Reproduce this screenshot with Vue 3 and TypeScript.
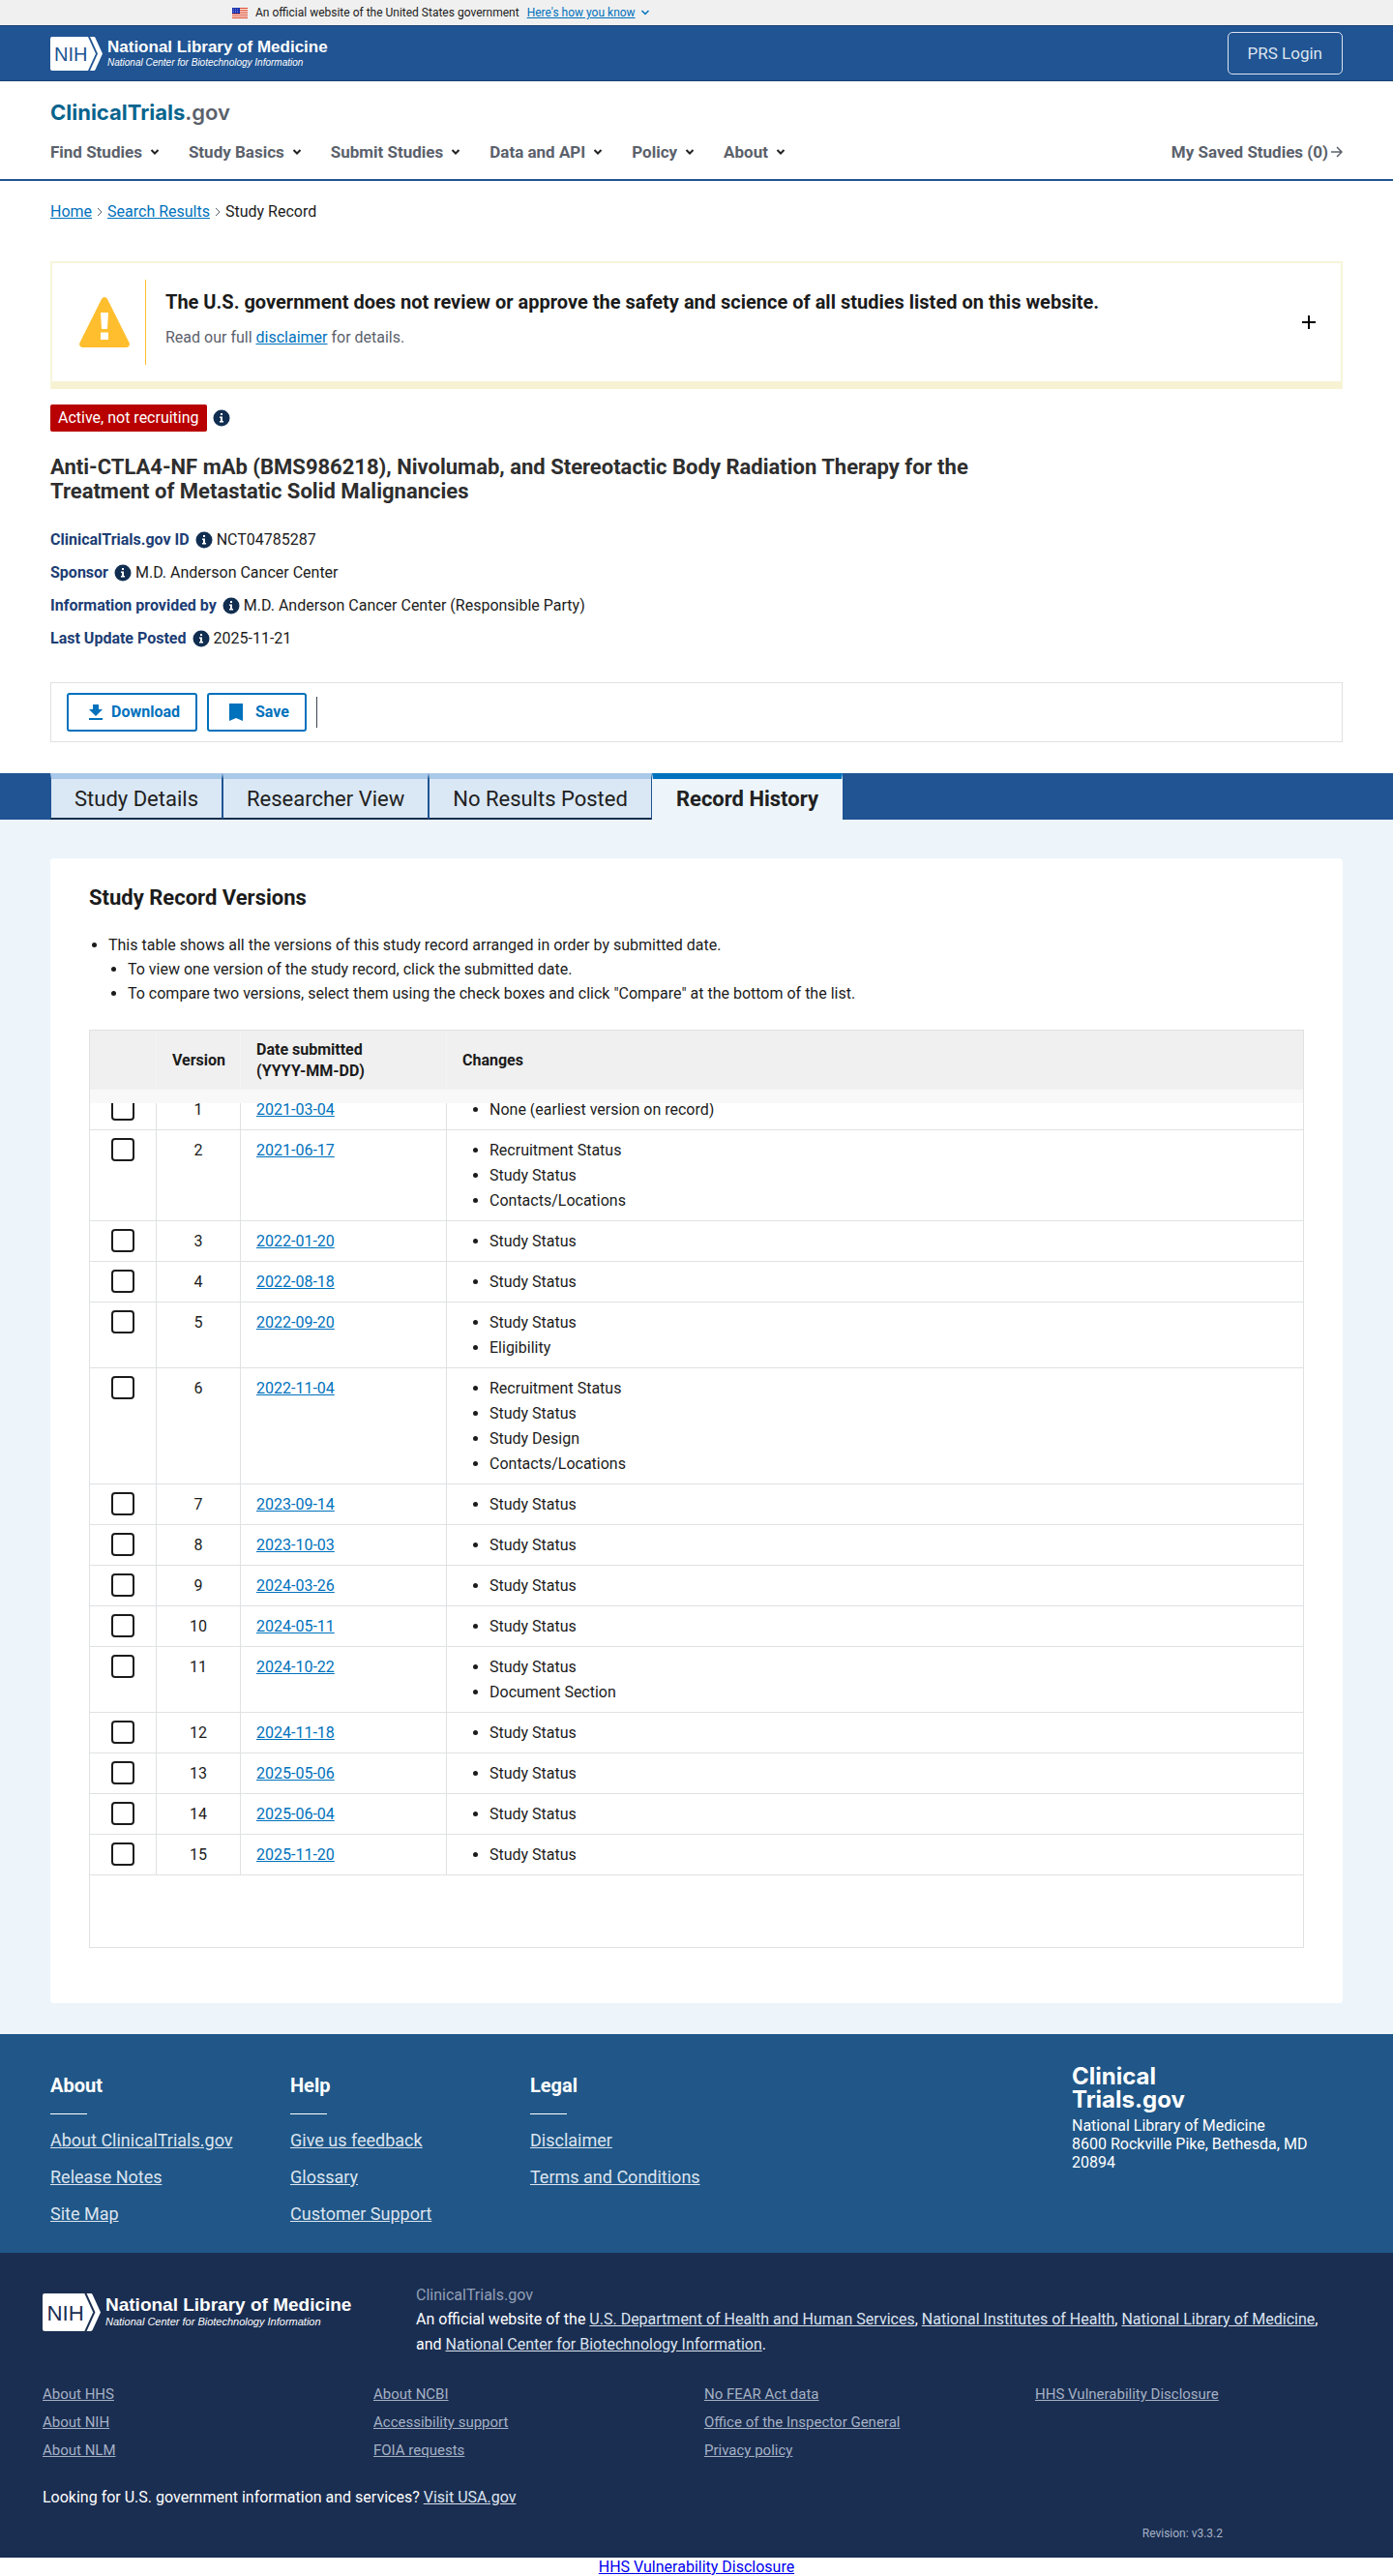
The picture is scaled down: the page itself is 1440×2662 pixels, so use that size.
<script setup lang="ts">
import { ref } from 'vue'

interface Version {
  id: number
  date: string
  changes: string[]
}

const navItems = ['Find Studies', 'Study Basics', 'Submit Studies', 'Data and API', 'Policy', 'About']

const facts = [
  { label: 'ClinicalTrials.gov ID', value: 'NCT04785287' },
  { label: 'Sponsor', value: 'M.D. Anderson Cancer Center' },
  { label: 'Information provided by', value: 'M.D. Anderson Cancer Center (Responsible Party)' },
  { label: 'Last Update Posted', value: '2025-11-21' },
]

const tabs = ['Study Details', 'Researcher View', 'No Results Posted', 'Record History']
const activeTab = ref('Record History')

const versions: Version[] = [
  { id: 1, date: '2021-03-04', changes: ['None (earliest version on record)'] },
  { id: 2, date: '2021-06-17', changes: ['Recruitment Status', 'Study Status', 'Contacts/Locations'] },
  { id: 3, date: '2022-01-20', changes: ['Study Status'] },
  { id: 4, date: '2022-08-18', changes: ['Study Status'] },
  { id: 5, date: '2022-09-20', changes: ['Study Status', 'Eligibility'] },
  { id: 6, date: '2022-11-04', changes: ['Recruitment Status', 'Study Status', 'Study Design', 'Contacts/Locations'] },
  { id: 7, date: '2023-09-14', changes: ['Study Status'] },
  { id: 8, date: '2023-10-03', changes: ['Study Status'] },
  { id: 9, date: '2024-03-26', changes: ['Study Status'] },
  { id: 10, date: '2024-05-11', changes: ['Study Status'] },
  { id: 11, date: '2024-10-22', changes: ['Study Status', 'Document Section'] },
  { id: 12, date: '2024-11-18', changes: ['Study Status'] },
  { id: 13, date: '2025-05-06', changes: ['Study Status'] },
  { id: 14, date: '2025-06-04', changes: ['Study Status'] },
  { id: 15, date: '2025-11-20', changes: ['Study Status'] },
]
const selected = ref<number[]>([])

const footerColumns = [
  { title: 'About', links: ['About ClinicalTrials.gov', 'Release Notes', 'Site Map'] },
  { title: 'Help', links: ['Give us feedback', 'Glossary', 'Customer Support'] },
  { title: 'Legal', links: ['Disclaimer', 'Terms and Conditions'] },
]

const agencyLinks = [
  ['About HHS', 'About NIH', 'About NLM'],
  ['About NCBI', 'Accessibility support', 'FOIA requests'],
  ['No FEAR Act data', 'Office of the Inspector General', 'Privacy policy'],
  ['HHS Vulnerability Disclosure'],
]
</script>

<template>
  <div class="page">
    <section class="gov-banner" aria-label="Official government website">
      <svg class="flag" viewBox="0 0 16 11" aria-hidden="true">
        <rect width="16" height="11" fill="#fff" />
        <path d="M0 .5h16M0 2.5h16M0 4.5h16M0 6.5h16M0 8.5h16M0 10.5h16" stroke="#db3e1f" />
        <rect width="8" height="6" fill="#1e33b1" />
        <path d="M1 1.5h6M1 3.5h6M1 5h6" stroke="#8d99e0" stroke-dasharray="1 1" stroke-width=".7" />
      </svg>
      <span>An official website of the United States government</span>
      <button type="button" class="how">
        <span>Here's how you know</span>
        <svg viewBox="0 0 10 10" aria-hidden="true"><path d="M1.5 3 5 6.5 8.5 3" /></svg>
      </button>
    </section>

    <div class="nlm-bar">
      <a href="#" class="nlm-logo">
        <svg viewBox="0 0 54 35" aria-hidden="true">
          <path d="M2 0h37l8 17.5-8 17.5H2a2 2 0 0 1-2-2V2a2 2 0 0 1 2-2z" fill="#fff" />
          <path d="M41 0h4q1 0 1.500 1L54 17.5 46.500 34q-.5 1-1.500 1h-4l8-17.500z" fill="#fff" />
          <text x="4" y="25" fill="#205493">NIH</text>
        </svg>
        <span class="nlm-words">
          <strong>National Library of Medicine</strong>
          <em>National Center for Biotechnology Information</em>
        </span>
      </a>
      <button type="button" class="prs">PRS Login</button>
    </div>

    <header class="site-head">
      <a href="#" class="brand">ClinicalTrials<span>.gov</span></a>
      <nav class="main-nav" aria-label="Main">
        <button v-for="item in navItems" :key="item" type="button">
          {{ item }}
          <svg viewBox="0 0 10 10" aria-hidden="true"><path d="M1.5 3 5 6.5 8.5 3" /></svg>
        </button>
        <a href="#" class="saved">
          My Saved Studies (0)
          <svg viewBox="0 0 12 12" aria-hidden="true"><path d="M0 6h11M6 1l5 5-5 5" /></svg>
        </a>
      </nav>
    </header>

    <main>
      <div class="intro">
        <nav class="crumbs" aria-label="Breadcrumb">
          <a href="#">Home</a>
          <svg viewBox="0 0 6 10" aria-hidden="true"><path d="M1 1l4 4-4 4" /></svg>
          <a href="#">Search Results</a>
          <svg viewBox="0 0 6 10" aria-hidden="true"><path d="M1 1l4 4-4 4" /></svg>
          <span>Study Record</span>
        </nav>

        <section class="notice">
          <svg class="warn" viewBox="0 0 52 52" aria-hidden="true">
            <path d="M23 2q3-4 6 0l22.5 45q1.5 4-2.500 5H3q-4-1-2.500-5z" fill="#ffbe2e" />
            <path d="M22 16h8l-1 17h-6zM22 36.5h8V44h-8z" fill="#fff" />
          </svg>
          <div class="notice-text">
            <h2>The U.S. government does not review or approve the safety and science of all studies listed on this website.</h2>
            <p>Read our full <a href="#">disclaimer</a> for details.</p>
          </div>
          <button type="button" class="expand" aria-label="Show more">
            <svg viewBox="0 0 14 14" aria-hidden="true"><path d="M7 0v14M0 7h14" /></svg>
          </button>
        </section>

        <div class="status">
          <span class="tag">Active, not recruiting</span>
          <button type="button" class="info" aria-label="About this status">
            <svg viewBox="0 0 18 18" aria-hidden="true"><circle cx="9" cy="9" r="8.5" /><path d="M8 4h2v2H8zM7 7.5h3V12h1v1.500H7V12h1V9H7z" /></svg>
          </button>
        </div>

        <h1>Anti-CTLA4-NF mAb (BMS986218), Nivolumab, and Stereotactic Body Radiation Therapy for the Treatment of Metastatic Solid Malignancies</h1>

        <dl class="facts">
          <div v-for="fact in facts" :key="fact.label">
            <dt>{{ fact.label }}</dt>
            <dd>
              <button type="button" class="info" :aria-label="`About ${fact.label}`">
                <svg viewBox="0 0 18 18" aria-hidden="true"><circle cx="9" cy="9" r="8.5" /><path d="M8 4h2v2H8zM7 7.5h3V12h1v1.500H7V12h1V9H7z" /></svg>
              </button>
              {{ fact.value }}
            </dd>
          </div>
        </dl>

        <div class="actions">
          <button type="button">
            <svg viewBox="0 0 16 18" aria-hidden="true"><path d="M5 1h6v5h4l-7 7-7-7h4zM1 15h14v2H1z" /></svg>
            Download
          </button>
          <button type="button">
            <svg viewBox="0 0 16 18" aria-hidden="true"><path d="M1 0h14v18l-7-3-7 3z" /></svg>
            Save
          </button>
          <span class="divider"></span>
        </div>
      </div>

      <nav class="tabs" aria-label="Study record views">
        <a v-for="tab in tabs" :key="tab" href="#" :class="{ active: tab === activeTab }" @click.prevent="activeTab = tab">{{ tab }}</a>
      </nav>

      <div class="content">
        <section class="card">
          <h2>Study Record Versions</h2>
          <ul class="help">
            <li>
              This table shows all the versions of this study record arranged in order by submitted date.
              <ul>
                <li>To view one version of the study record, click the submitted date.</li>
                <li>To compare two versions, select them using the check boxes and click "Compare" at the bottom of the list.</li>
              </ul>
            </li>
          </ul>

          <div class="table-wrap">
            <table>
              <colgroup>
                <col class="c-check" />
                <col class="c-version" />
                <col class="c-date" />
                <col />
              </colgroup>
              <thead>
                <tr>
                  <th scope="col" aria-label="Select"></th>
                  <th scope="col" class="center">Version</th>
                  <th scope="col">Date submitted<br />(YYYY-MM-DD)</th>
                  <th scope="col">Changes</th>
                </tr>
              </thead>
              <tbody>
                <tr v-for="version in versions" :key="version.id">
                  <td class="check">
                    <input v-model="selected" type="checkbox" :value="version.id" :aria-label="`Select version ${version.id}`" />
                  </td>
                  <td class="center">{{ version.id }}</td>
                  <td><a href="#">{{ version.date }}</a></td>
                  <td>
                    <ul>
                      <li v-for="change in version.changes" :key="change">{{ change }}</li>
                    </ul>
                  </td>
                </tr>
              </tbody>
            </table>
          </div>
        </section>
      </div>
    </main>

    <footer>
      <div class="foot-main">
        <div v-for="column in footerColumns" :key="column.title" class="foot-col">
          <h3>{{ column.title }}</h3>
          <a v-for="link in column.links" :key="link" href="#">{{ link }}</a>
        </div>
        <address>
          <strong>Clinical<br />Trials.gov</strong>
          National Library of Medicine<br />8600 Rockville Pike, Bethesda, MD 20894
        </address>
      </div>

      <div class="foot-agency">
        <div class="agency-top">
          <a href="#" class="nlm-logo large">
            <svg viewBox="0 0 54 35" aria-hidden="true">
              <path d="M2 0h37l8 17.5-8 17.5H2a2 2 0 0 1-2-2V2a2 2 0 0 1 2-2z" fill="#fff" />
              <path d="M41 0h4q1 0 1.500 1L54 17.5 46.500 34q-.5 1-1.500 1h-4l8-17.500z" fill="#fff" />
              <text x="4" y="25" fill="#1a2e52">NIH</text>
            </svg>
            <span class="nlm-words">
              <strong>National Library of Medicine</strong>
              <em>National Center for Biotechnology Information</em>
            </span>
          </a>
          <div class="agency-text">
            <p class="muted">ClinicalTrials.gov</p>
            <p>
              An official website of the <a href="#">U.S. Department of Health and Human Services</a>, <a href="#">National Institutes of Health</a>, <a href="#">National Library of Medicine</a>, <span>and <a href="#">National Center for Biotechnology Information</a>.</span>
            </p>
          </div>
        </div>
        <div class="agency-links">
          <ul v-for="(group, index) in agencyLinks" :key="index">
            <li v-for="link in group" :key="link"><a href="#">{{ link }}</a></li>
          </ul>
        </div>
        <p class="looking">Looking for U.S. government information and services? <a href="#">Visit USA.gov</a></p>
        <p class="revision">Revision: v3.3.2</p>
      </div>
      <div class="disclosure"><a href="#">HHS Vulnerability Disclosure</a></div>
    </footer>
  </div>
</template>

<style>
body {
  margin: 0;
  background: #fff;
}
</style>

<style scoped>
.page {
  font-family: Roboto, "Liberation Sans", sans-serif;
  font-size: 16px;
  line-height: 26px;
  color: #1b1b1b;
}

.page *,
.page *::before,
.page *::after {
  box-sizing: border-box;
}

button {
  margin: 0;
  padding: 0;
  border: 0;
  background: none;
  font: inherit;
  color: inherit;
  cursor: pointer;
}

svg {
  display: block;
  flex: none;
}

h1,
h2,
h3,
p,
dl,
dd {
  margin: 0;
}

a {
  color: #0071bc;
}

/* Government banner */
.gov-banner {
  display: flex;
  align-items: center;
  height: 26px;
  padding-left: 240px;
  background: #f0f0f0;
  font-size: 12px;
}

.flag {
  width: 16px;
  height: 11px;
  margin-right: 8px;
}

.how {
  display: flex;
  align-items: center;
  gap: 5px;
  margin-left: 8px;
  color: #0071bc;
}

.how span {
  text-decoration: underline;
}

.how svg {
  width: 10px;
  height: 10px;
  fill: none;
  stroke: currentColor;
  stroke-width: 1.5;
}

/* NLM bar */
.nlm-bar {
  display: flex;
  align-items: center;
  justify-content: space-between;
  height: 58px;
  padding: 0 52px;
  background: #205493;
  border-top: 1px solid #1b4273;
  border-bottom: 1px solid #1b4273;
}

.nlm-logo {
  display: flex;
  align-items: center;
  gap: 5px;
  color: #fff;
  text-decoration: none;
  font-family: "Liberation Sans", Arial, sans-serif;
}

.nlm-logo svg {
  width: 54px;
  height: 35px;
}

.nlm-logo text {
  font-size: 20px;
}

.nlm-words {
  display: flex;
  flex-direction: column;
}

.nlm-words strong {
  font-size: 17px;
  line-height: 18px;
}

.nlm-words em {
  font-size: 10px;
  line-height: 13px;
}

.nlm-logo.large svg {
  width: 60px;
  height: 39px;
}

.large strong {
  font-size: 19px;
  line-height: 20px;
}

.large em {
  font-size: 11px;
  line-height: 15px;
}

.prs {
  padding: 8px 20px;
  border: 1px solid #dce4ef;
  border-radius: 5px;
  color: #dce4ef;
  font-size: 17px;
}

/* Site header */
.site-head {
  padding: 18px 52px 15px;
  border-bottom: 2px solid #205493;
}

.brand {
  display: block;
  font-family: Inter, Lato, sans-serif;
  font-size: 22px;
  line-height: 28px;
  font-weight: 700;
  color: #07648d;
  text-decoration: none;
}

.brand span {
  color: #5b616b;
  font-weight: 600;
}

.main-nav {
  display: flex;
  align-items: center;
  gap: 30px;
  margin-top: 14px;
  font-size: 17px;
  font-weight: 700;
  color: #5b616b;
}

.main-nav button,
.saved {
  display: flex;
  align-items: center;
  gap: 8px;
}

.main-nav svg {
  width: 10px;
  height: 10px;
  fill: none;
  stroke: #212121;
  stroke-width: 2;
}

.saved {
  gap: 3px;
  margin-left: auto;
  color: inherit;
  text-decoration: none;
}

.main-nav .saved svg {
  width: 12px;
  height: 12px;
  stroke: #5b616b;
  stroke-width: 1.5;
}

/* Study summary */
.intro {
  padding: 19px 52px 32px;
}

.crumbs {
  display: flex;
  align-items: center;
  gap: 5px;
}

.crumbs svg {
  width: 6px;
  height: 10px;
  fill: none;
  stroke: #5b616b;
}

.notice {
  display: flex;
  align-items: center;
  height: 132px;
  margin-top: 38px;
  padding: 0 26px 0 28px;
  border: 2px solid #f7f5da;
  border-bottom: 8px solid #f7f2d2;
}

.warn {
  width: 52px;
  height: 52px;
}

.notice-text {
  flex: 1;
  height: 88px;
  margin-left: 16px;
  padding: 10px 20px 0;
  border-left: 1px solid #ffbe2e;
}

.notice-text h2 {
  font-size: 20px;
  line-height: 26px;
}

.notice-text p {
  margin-top: 11px;
  color: #5b616b;
}

.expand svg {
  width: 14px;
  height: 14px;
  stroke: #000;
  stroke-width: 2;
}

.status {
  display: flex;
  align-items: center;
  gap: 6px;
  margin-top: 16px;
}

.tag {
  padding: 1px 8px;
  border-radius: 2px;
  background: #b80000;
  color: #fff;
}

.info svg {
  width: 18px;
  height: 18px;
  fill: #112e51;
}

.info svg path {
  fill: #fff;
}

h1 {
  max-width: 1000px;
  margin-top: 24px;
  font-size: 22px;
  line-height: 25px;
  color: #2e2e2e;
}

.facts {
  margin-top: 21px;
}

.facts > div {
  display: flex;
  align-items: center;
  height: 34px;
}

dt {
  font-weight: 700;
  color: #1c3d74;
}

dd {
  display: flex;
  align-items: center;
  gap: 4px;
  margin-left: 6px;
}

.actions {
  display: flex;
  align-items: center;
  gap: 10px;
  height: 62px;
  margin-top: 28px;
  padding: 0 16px;
  border: 1px solid #dfe1e2;
}

.actions button {
  display: flex;
  align-items: center;
  gap: 8px;
  height: 40px;
  padding: 0 16px 0 20px;
  border: 2px solid #0071bc;
  border-radius: 3px;
  color: #0071bc;
  font-weight: 700;
}

.actions button + button {
  gap: 12px;
}

.actions svg {
  width: 16px;
  height: 18px;
  fill: currentColor;
}

.divider {
  width: 1px;
  height: 32px;
  background: #3d4551;
}

/* Tabs */
.tabs {
  display: flex;
  height: 48px;
  padding: 0 52px;
  background: #205493;
  font-size: 22px;
}

.tabs a {
  padding: 8px 24px 0;
  border-top: 6px solid #a9c9e8;
  border-bottom: 2px solid #112e51;
  border-left: 1px solid #205493;
  border-right: 1px solid #205493;
  background: #dae8f5;
  color: #212121;
  text-decoration: none;
}

.tabs .active {
  border-color: #0071bc #edf5fb #edf5fb;
  background: #edf5fb;
  font-weight: 700;
}

/* Versions */
.content {
  padding: 40px 52px 32px;
  background: #edf5fb;
}

.card {
  padding: 28px 40px 57px;
  border-radius: 4px;
  background: #fff;
}

.card h2 {
  font-size: 22px;
  line-height: 26px;
}

.help {
  margin: 23px 0 25px;
  padding-left: 20px;
  line-height: 25px;
}

.help ul {
  padding-left: 20px;
  list-style: disc;
}

.table-wrap {
  padding-bottom: 74px;
  border: 1px solid #dfe1e2;
}

table {
  width: 100%;
  table-layout: fixed;
  border-collapse: separate;
  border-spacing: 0;
}

.c-check {
  width: 69px;
}

.c-version {
  width: 87px;
}

.c-date {
  width: 213px;
}

thead {
  position: relative;
}

thead::after {
  content: "";
  position: absolute;
  top: 100%;
  left: 0;
  width: 100%;
  height: 14px;
  background: #f8f8f8;
}

th {
  height: 61px;
  padding: 0 16px;
  border-right: 1px solid #f4f4f4;
  background: #f0f0f0;
  line-height: 22px;
  text-align: left;
}

td {
  padding: 8px 16px 7px;
  border-right: 1px solid #dfe1e2;
  border-bottom: 1px solid #dfe1e2;
  vertical-align: top;
}

th:last-child,
td:last-child {
  border-right: 0;
}

.center {
  text-align: center;
}

td ul {
  margin: 0;
  padding-left: 28px;
}

.check {
  padding-left: 22px;
}

.check input {
  display: block;
  width: 24px;
  height: 24px;
  margin: 0;
  border: 2px solid #1b1b1b;
  border-radius: 4px;
  background: #fff;
  appearance: none;
}

.check input:checked {
  background: #0071bc;
}

/* Footer */
.foot-main {
  display: flex;
  min-height: 226px;
  padding: 0 52px;
  background: #205788;
  color: #fff;
}

.foot-col {
  display: flex;
  flex-direction: column;
  align-items: flex-start;
  width: 248px;
  padding-top: 40px;
}

.foot-col h3 {
  font-size: 20px;
  line-height: 26px;
}

.foot-col h3::after {
  content: "";
  display: block;
  width: 38px;
  height: 1px;
  margin: 16px 0 8px;
  background: #fff;
}

.foot-col a {
  font-size: 18px;
  line-height: 38px;
  color: #dce4ef;
}

address {
  width: 280px;
  margin-left: auto;
  padding-top: 32px;
  font-style: normal;
  line-height: 19px;
}

address strong {
  display: block;
  margin-bottom: 5px;
  font-family: Inter, Lato, sans-serif;
  font-size: 24px;
  line-height: 24px;
}

.foot-agency {
  padding: 31px 44px 15px;
  background: #1a2e52;
  color: #fff;
}

.agency-top {
  display: flex;
}

.agency-top .nlm-logo {
  align-self: flex-start;
  width: 386px;
  margin-top: 11px;
}

.agency-text {
  flex: 1;
  padding-right: 24px;
}

.agency-text a,
.looking a {
  color: #dce4ef;
}

.agency-text .muted {
  color: #919fb5;
  line-height: 25px;
}

.agency-links {
  display: grid;
  grid-template-columns: repeat(4, 342px);
  margin-top: 24px;
  font-size: 15px;
  line-height: 29px;
}

.agency-links ul {
  margin: 0;
  padding: 0;
  list-style: none;
}

.agency-links a {
  color: #a5b1c4;
}

.looking {
  margin-top: 21px;
}

.revision {
  margin-top: 14px;
  padding-right: 132px;
  text-align: right;
  font-size: 12px;
  line-height: 20px;
  color: #a5b1c4;
}

.disclosure {
  text-align: center;
  line-height: 19px;
}

.disclosure a {
  color: #00e;
}
</style>
